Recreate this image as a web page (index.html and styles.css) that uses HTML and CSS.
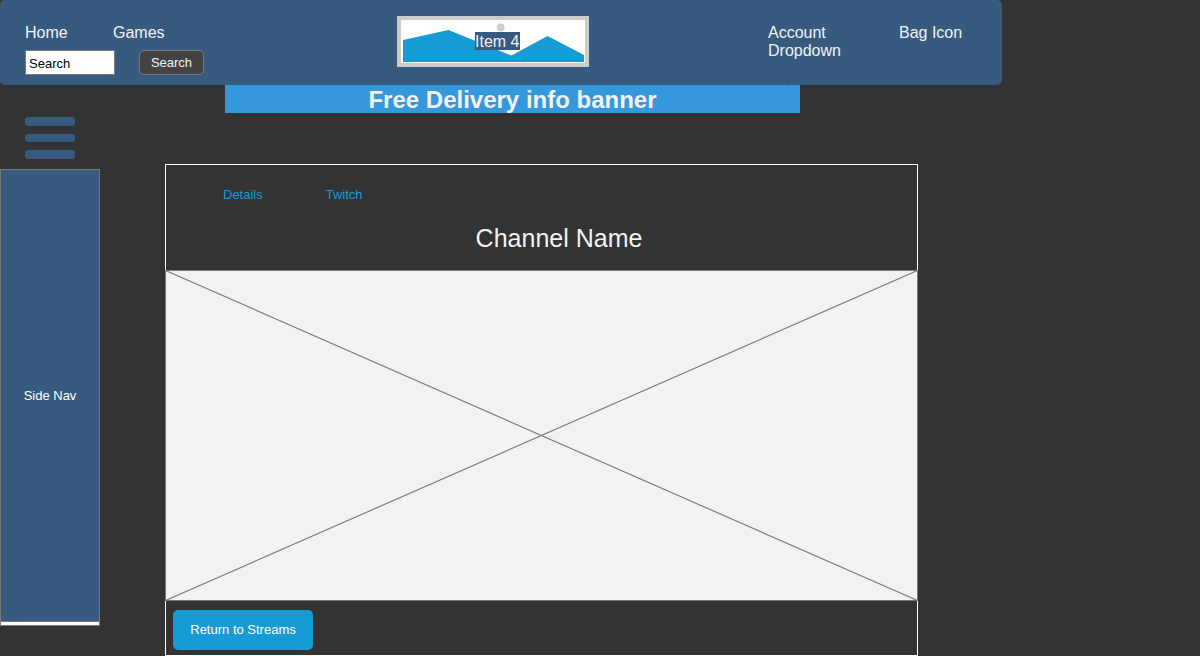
FILE: index.html
```html
<!DOCTYPE html>
<html lang="en">
<head>
<meta charset="utf-8">
<title>Channel Name</title>
<link rel="stylesheet" href="styles.css">
</head>
<body>
<header class="topbar">
  <div class="topbar-left">
    <nav class="main-nav"><a class="nav-home">Home</a><a>Games</a></nav>
    <form class="search">
      <input class="search-input" type="text" value="Search" aria-label="Search">
      <button class="search-button" type="button">Search</button>
    </form>
  </div>
  <div class="logo">
    <svg class="logo-art" width="184" height="43" viewBox="0 0 184 43">
      <path d="M2 20 47.5 10 110.500 35.500 146.500 16 183 35V42H2Z" fill="#169bd5"/>
      <circle cx="99.700" cy="7.500" r="3.900" fill="#ccc"/>
    </svg>
    <span class="logo-label">Item 4</span>
  </div>
  <nav class="user-nav"><a class="account">Account Dropdown</a><a>Bag Icon</a></nav>
</header>
<div class="banner"><h1 class="banner-text">Free Delivery info banner</h1><span class="banner-tick"></span></div>
<div class="page">
  <aside class="sidebar">
    <div class="menu-icon"><span class="bar"></span><span class="bar bar-mid"></span><span class="bar"></span></div>
    <div class="side-nav"><div class="side-nav-body">Side Nav</div></div>
  </aside>
  <main class="panel">
    <nav class="tabs"><a class="tab">Details</a><a class="tab">Twitch</a></nav>
    <h2 class="channel">Channel Name</h2>
    <svg class="placeholder" width="753" height="331" viewBox="0 0 753 331">
      <rect x=".5" y=".5" width="752" height="330" fill="#f2f2f2" stroke="#797979"/>
      <path d="M.5.5 752.5 330.500M752.5.5.5 330.500" stroke="#797979" stroke-width="1.15" fill="none"/>
    </svg>
    <button class="return" type="button">Return to Streams</button>
  </main>
</div>
</body>
</html>
```
FILE: styles.css
```css
* { box-sizing: border-box; }
body {
  margin: 0;
  height: 656px;
  overflow: hidden;
  background: #333;
  color: #f2f2f2;
  font: 13px/15px "Liberation Sans", Arial, sans-serif;
}
.topbar {
  display: flex;
  width: 1002px;
  height: 85px;
  padding-left: 25px;
  border-radius: 5px;
  background: #375b7f;
  font-size: 16px;
  line-height: 18px;
}
.topbar-left { width: 372px; padding-top: 24px; }
.main-nav { display: flex; }
.nav-home { width: 88px; }
.search { display: flex; gap: 24px; margin: 8px 0 0; }
.search-input {
  width: 90px;
  height: 25px;
  padding: 2px 3px 1px;
  border: 1px solid #797979;
  border-radius: 0;
  background: #fff;
  color: #000;
  font: 13px "Liberation Sans", Arial, sans-serif;
}
.search-button {
  width: 65px;
  height: 25px;
  padding: 0;
  border: 1px solid #797979;
  border-radius: 5px;
  background: #434343;
  color: #f2f2f2;
  font: 13px "Liberation Sans", Arial, sans-serif;
}
.logo {
  position: relative;
  width: 192px;
  height: 51px;
  margin-top: 16px;
  border: 4px solid #ccc;
  background: #fff;
}
.logo-art { display: block; }
.logo-label {
  position: absolute;
  left: 74px;
  top: 12px;
  width: 45px;
  height: 18px;
  background: #375b7f;
  line-height: 19px;
  white-space: nowrap;
}
.user-nav { display: flex; margin-left: 179px; padding-top: 24px; }
.account { width: 131px; padding-right: 50px; }
.banner { position: relative; width: 575px; height: 28px; margin-left: 225px; background: #3598dc; }
.banner-text { margin: 0; padding-top: 1px; font-size: 24px; line-height: 27px; text-align: center; }
.banner-tick { position: absolute; top: 0; right: 11px; width: 1px; height: 1px; background: #375b7f; }
.page { display: flex; gap: 65px; }
.sidebar { width: 100px; padding-top: 4px; }
.menu-icon {
  display: flex;
  flex-direction: column;
  gap: 8px;
  width: 50px;
  margin: 0 0 10px 25px;
}
.bar { height: 9px; border-radius: 3px; background: #375b7f; }
.bar-mid { height: 8px; }
.side-nav { height: 457px; border: 1px solid #797979; background: #fff; }
.side-nav-body {
  display: flex;
  align-items: center;
  justify-content: center;
  height: 452px;
  border-bottom: 1px solid #797979;
  background: #375b7f;
  color: #fff;
}
.panel { width: 753px; height: 492px; margin-top: 51px; border: 1px solid #fff; }
.tabs { display: flex; gap: 63px; padding: 22px 0 0 57px; color: #169bd5; }
.channel { margin: 21px 0 17px 35px; font-size: 25px; font-weight: 400; line-height: 30px; text-align: center; }
.placeholder { display: block; margin-left: -1px; }
.return {
  width: 140px;
  height: 40px;
  margin: 9px 0 0 7px;
  padding: 0 0 2px;
  border: 0;
  border-radius: 5px;
  background: #169bd5;
  color: #fff;
  font: 13px "Liberation Sans", Arial, sans-serif;
}
```
